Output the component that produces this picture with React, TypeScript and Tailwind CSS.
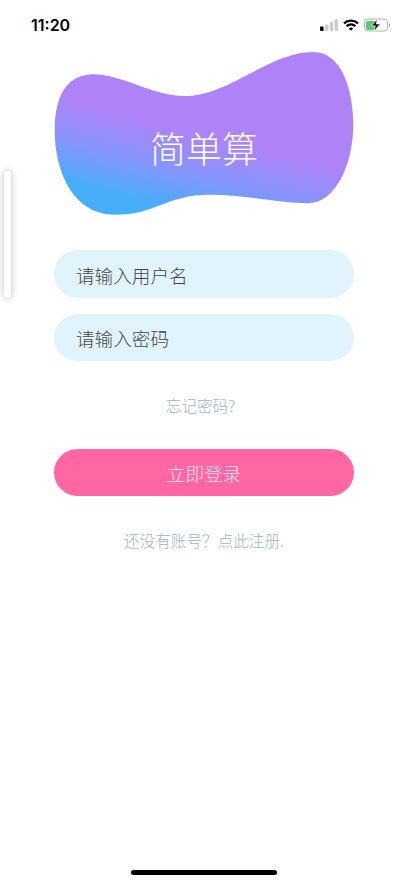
import React, { useState } from "react";

const StatusBar: React.FC = () => {
  return (
    <div className="flex h-[51px] items-start justify-between pl-[31px] pr-[17px] pt-[15px]">
      <span className="font-['Inter',sans-serif] text-[16px] font-semibold leading-5 text-black">
        11:20
      </span>
      <div className="flex items-center gap-[5px] pt-[3px]">
        <svg width="18" height="12" viewBox="0 0 18 12">
          <rect x="0" y="7.5" width="3.6" height="4.5" rx="1" fill="#000" />
          <rect x="5" y="5.5" width="3.4" height="6.5" rx="1" fill="#ccc" />
          <rect x="9.8" y="3" width="3.4" height="9" rx="1" fill="#ccc" />
          <rect x="14.6" y="0.3" width="3.4" height="11.7" rx="1" fill="#ccc" />
        </svg>
        <svg width="16" height="12" viewBox="0 0 16 12" fill="none" stroke="#000">
          <path d="M1 4.3C5 .7 11 .7 15 4.3" strokeWidth="2.3" />
          <path d="M3.6 7.1C6.2 4.9 9.8 4.9 12.4 7.1" strokeWidth="2.2" />
          <path d="M5.8 9.4C7 8.3 9 8.3 10.2 9.4L8 11.7Z" fill="#000" stroke="none" />
        </svg>
        <svg width="27" height="14" viewBox="0 0 27 14">
          <rect x="0.5" y="1" width="23" height="12" rx="3.3" fill="#fff" stroke="#b0b0b0" />
          <path d="M2 5a2 2 0 0 1 2-2h8v9H4a2 2 0 0 1-2-2Z" fill="#58c878" />
          <path d="M25 5v4.2c1.6-.6 1.6-3.6 0-4.2Z" fill="#aaa" />
          <path
            d="M13.4.9 7.2 7.8h4.1l-1.4 5.3 6.5-7.1h-4.2Z"
            fill="#000"
            stroke="#fff"
            strokeWidth="0.7"
          />
        </svg>
      </div>
    </div>
  );
};

const Logo: React.FC = () => {
  return (
    <div className="relative h-[165px] w-[300px]">
      <svg width="300" height="165" viewBox="0 0 300 165">
        <defs>
          <linearGradient id="blob" gradientUnits="userSpaceOnUse" x1="36" y1="139" x2="56" y2="60">
            <stop offset="0" stopColor="#45affc" />
            <stop offset="0.5" stopColor="#8595fd" />
            <stop offset="1" stopColor="#ae83f8" />
          </linearGradient>
        </defs>
        <path
          d="M.7 79C.7 42 15 23.3 39.3 23.3C68 23.3 98 45 131 45C175 45 215 1 259.3 1C287 1 299.3 37 299.3 74C299.3 112 282 152.3 254 152.3C225 152.3 190 143.7 156 143.7C112 143.7 102 163.7 61 163.7C20 163.7 .7 122 .7 79Z"
          fill="url(#blob)"
        />
      </svg>
      <h1 className="absolute inset-x-0 top-[70px] text-center text-[36px] font-light leading-[52px] text-white">
        简单算
      </h1>
    </div>
  );
};

const App: React.FC = () => {
  const [username, setUsername] = useState("");
  const [password, setPassword] = useState("");

  return (
    <div className="relative flex h-[883px] w-[408px] flex-col overflow-hidden bg-white font-['Noto_Sans_CJK_SC',sans-serif]">
      <StatusBar />

      {/* side handle */}
      <div className="absolute left-[4px] top-[171px] h-[127px] w-[7px] rounded-full bg-white shadow-[0_0_6px_1px_rgba(0,0,0,0.2)]" />

      <div className="flex flex-col items-center">
        <Logo />

        <form className="mt-[34px] flex w-[300px] flex-col" onSubmit={(e) => e.preventDefault()}>
          <input
            className="h-12 w-full rounded-full bg-[#e1f4fd] px-[22px] text-[18.6px] font-light text-[#444] outline-none placeholder:text-[#444]"
            placeholder="请输入用户名"
            value={username}
            onChange={(e) => setUsername(e.target.value)}
          />
          <input
            type="password"
            className="mt-4 h-[47px] w-full rounded-full bg-[#e1f4fd] px-[22px] text-[18.6px] font-light text-[#444] outline-none placeholder:text-[#444]"
            placeholder="请输入密码"
            value={password}
            onChange={(e) => setPassword(e.target.value)}
          />
          <a className="mt-8 pr-[7px] text-center text-[15.6px] font-light leading-6 text-[#a3b1cc]">
            忘记密码?
          </a>
          <button
            type="submit"
            className="mt-8 h-[47px] w-full rounded-full bg-[#ff66a3] text-[18.6px] font-light text-[#ffe4f2]"
          >
            立即登录
          </button>
        </form>

        <p className="mt-8 text-center text-[15.6px] font-light leading-6 text-[#a3b1cc]">
          还没有账号？点此注册.
        </p>
      </div>

      <div className="mb-[8px] mt-auto h-[5px] w-[146px] self-center rounded-full bg-black" />
    </div>
  );
};

export default App;
